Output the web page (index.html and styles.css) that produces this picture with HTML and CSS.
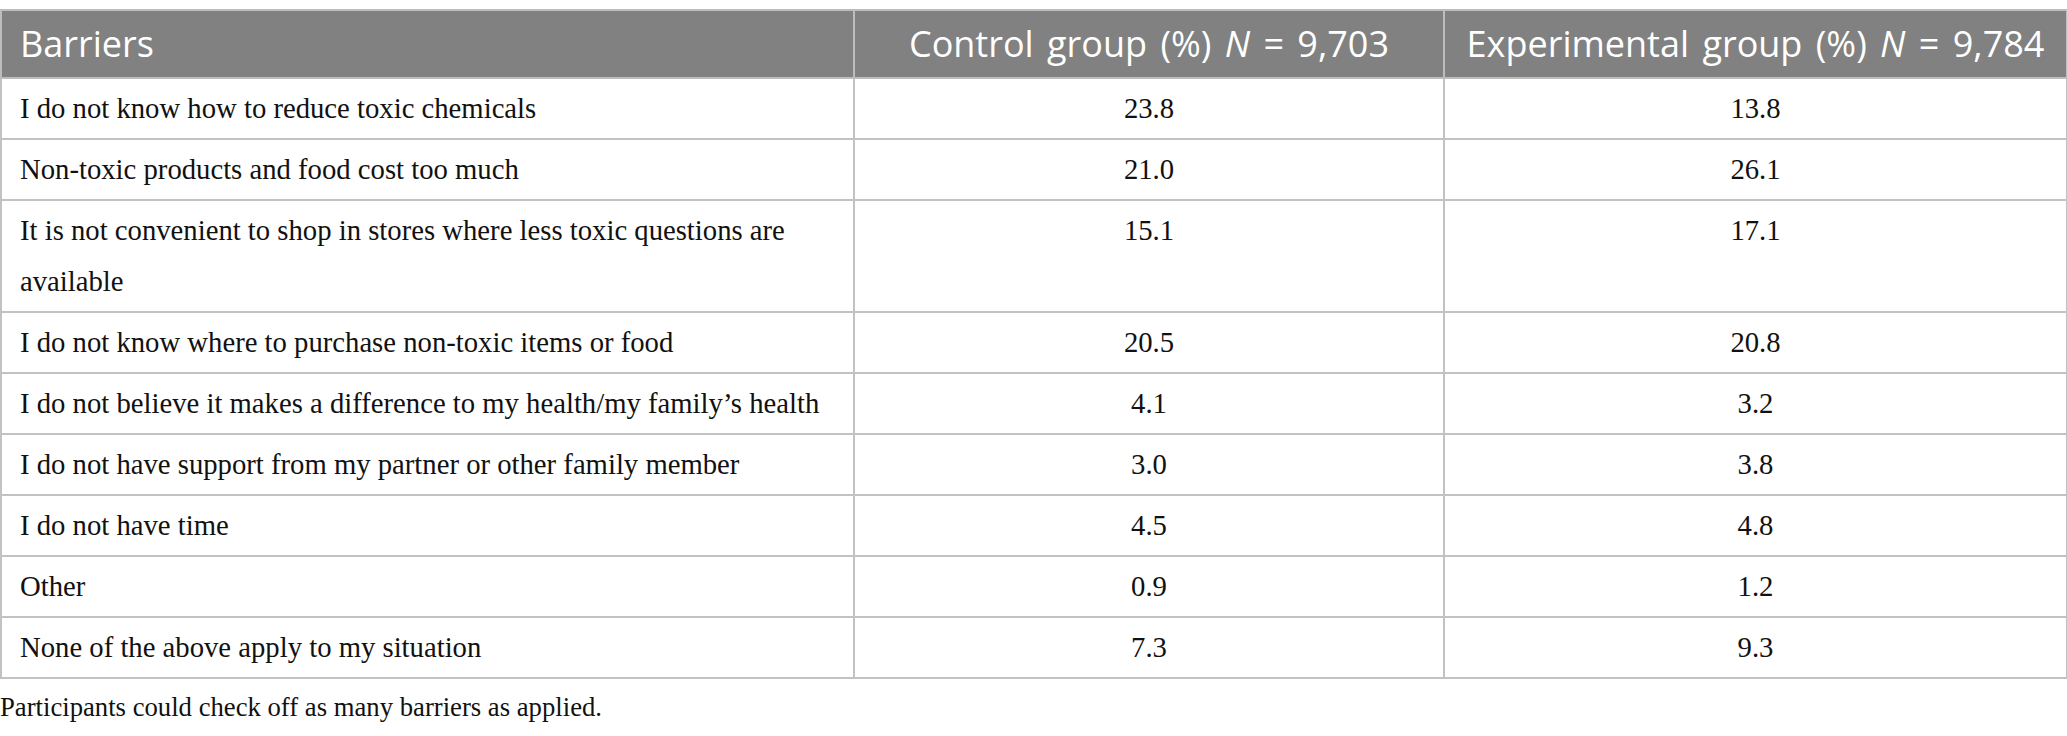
FILE: index.html
```html
<!DOCTYPE html>
<html>
<head>
<meta charset="utf-8">
<link rel="stylesheet" href="styles.css">
</head>
<body>
<div class="wrap">
<table class="data">
  <colgroup>
    <col class="c1">
    <col class="c2">
    <col class="c3">
  </colgroup>
  <thead>
    <tr>
      <th class="left">Barriers</th>
      <th>Control group (%) <i>N</i> = 9,703</th>
      <th>Experimental group (%) <i>N</i> = 9,784</th>
    </tr>
  </thead>
  <tbody>
    <tr><td class="left">I do not know how to reduce toxic chemicals</td><td>23.8</td><td>13.8</td></tr>
    <tr><td class="left">Non-toxic products and food cost too much</td><td>21.0</td><td>26.1</td></tr>
    <tr><td class="left">It is not convenient to shop in stores where less toxic questions are available</td><td>15.1</td><td>17.1</td></tr>
    <tr><td class="left">I do not know where to purchase non-toxic items or food</td><td>20.5</td><td>20.8</td></tr>
    <tr><td class="left">I do not believe it makes a difference to my health/my family’s health</td><td>4.1</td><td>3.2</td></tr>
    <tr><td class="left">I do not have support from my partner or other family member</td><td>3.0</td><td>3.8</td></tr>
    <tr><td class="left">I do not have time</td><td>4.5</td><td>4.8</td></tr>
    <tr><td class="left">Other</td><td>0.9</td><td>1.2</td></tr>
    <tr><td class="left">None of the above apply to my situation</td><td>7.3</td><td>9.3</td></tr>
  </tbody>
</table>
<p class="note">Participants could check off as many barriers as applied.</p>
</div>
</body>
</html>
```

FILE: styles.css
```css
html, body {
  margin: 0;
  padding: 0;
  background: #ffffff;
}

.wrap {
  padding-top: 9px;
}

.data {
  width: 2066px;
  border-collapse: collapse;
  table-layout: fixed;
}

.c1 { width: 853px; }
.c2 { width: 590px; }
.c3 { width: 623px; }

.data th {
  background: #808180;
  color: #ffffff;
  font-family: "Open Sans", "Noto Sans", sans-serif;
  font-weight: 400;
  font-size: 36px;
  line-height: 44px;
  word-spacing: 4px;
  padding: 11px 6px 11px;
  text-align: center;
  border: 2px solid #bdbdbd;
  white-space: nowrap;
}

.data th.left {
  text-align: left;
  padding-left: 18px;
  word-spacing: 0;
}

.data td {
  font-family: "Liberation Serif", "Times New Roman", serif;
  font-size: 28.7px;
  line-height: 51px;
  color: #111111;
  padding: 4px 20px 4px;
  text-align: center;
  vertical-align: top;
  border: 2px solid #c2c2c2;
}

.data td.left {
  text-align: left;
  padding-left: 18px;
  padding-right: 12px;
}

.note {
  margin: 8px 0 0;
  font-family: "Liberation Serif", "Times New Roman", serif;
  font-size: 26.7px;
  line-height: 40px;
  color: #111111;
}
```
